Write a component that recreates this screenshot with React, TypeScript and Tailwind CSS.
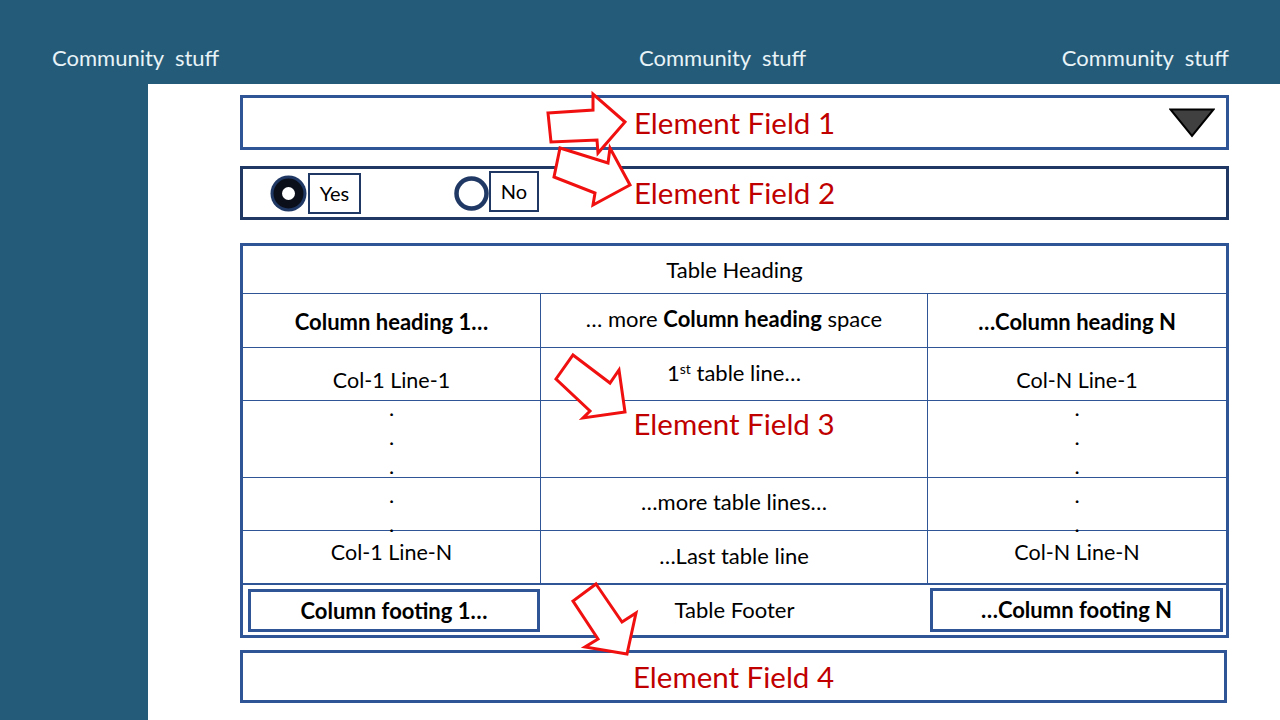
import React from "react";

const Dot = () => <div className="h-[10px] leading-[10px]">.</div>;

export default function App() {
  return (
    <div className="relative w-[1280px] h-[720px] overflow-hidden bg-[#245B79] font-['Lato',sans-serif] flex flex-col">
      {/* Header */}
      <header className="h-[84px] shrink-0 flex items-start pt-[44px] text-[#E8F3F7] text-[22px] leading-[28px]">
        <span className="ml-[52px] w-[168px] whitespace-nowrap">Community&nbsp; stuff</span>
        <span className="ml-[419px] w-[168px] whitespace-nowrap">Community&nbsp; stuff</span>
        <span className="ml-auto mr-[51px] whitespace-nowrap">Community&nbsp; stuff</span>
      </header>

      <div className="flex flex-1">
        <aside className="w-[148px] shrink-0" />
        <main className="flex-1 bg-white pl-[92px] pr-[51px] pt-[11px] flex flex-col text-black">
          {/* Element Field 1 */}
          <div className="h-[55px] border-[3px] border-[#2F5597] grid grid-cols-[1fr_auto_1fr] items-center">
            <div />
            <div className="text-[#C00000] text-[29.5px] leading-[34px]">Element Field 1</div>
            <div className="flex justify-end pr-[11px]">
              <svg width="46" height="30" viewBox="0 0 46 30">
                <polygon points="1.5,1.5 44.5,1.5 23,28" fill="#404040" stroke="#000" strokeWidth="2" strokeLinejoin="miter" />
              </svg>
            </div>
          </div>

          {/* Element Field 2 */}
          <div className="mt-[16px] h-[54px] border-[3px] border-[#1F3864] grid grid-cols-[1fr_auto_1fr] items-center">
            <div className="flex items-center pl-[27px]">
              <svg width="37" height="37" viewBox="0 0 37 37">
                <circle cx="18.5" cy="18.5" r="18" fill="#1F3864" />
                <circle cx="18.5" cy="18.5" r="15" fill="#0A0F1A" />
                <circle cx="18.5" cy="18.5" r="6.5" fill="#fff" />
              </svg>
              <div className="ml-[1px] w-[53px] h-[41px] border-[2.5px] border-[#1F3864] flex items-center justify-center text-[20px] leading-[24px]">
                Yes
              </div>
              <svg className="ml-[93px]" width="35" height="35" viewBox="0 0 35 35">
                <circle cx="17.5" cy="17.5" r="15" fill="#fff" stroke="#1F3864" strokeWidth="4.5" />
              </svg>
              <div className="-mt-[4px] w-[50px] h-[41px] border-[2.5px] border-[#1F3864] flex items-center justify-center text-[20px] leading-[24px]">
                No
              </div>
            </div>
            <div className="text-[#C00000] text-[29.5px] leading-[34px]">Element Field 2</div>
            <div />
          </div>

          {/* Element Field 3 : table */}
          <div className="mt-[23px] h-[395px] border-[3px] border-[#2F5597] flex flex-col text-[22px] leading-[26px]">
            <div className="h-[48px] shrink-0 border-b border-[#2F5597] flex items-center justify-center">
              Table Heading
            </div>

            <div className="h-[54px] shrink-0 border-b border-[#2F5597] grid grid-cols-[298px_387px_1fr]">
              <div className="border-r border-[#2F5597] text-center pt-[15px] font-bold">Column heading 1…</div>
              <div className="border-r border-[#2F5597] text-center pt-[12px]">
                … more <span className="font-bold">Column heading</span> space
              </div>
              <div className="text-center pt-[15px] font-bold">…Column heading N</div>
            </div>

            <div className="h-[53px] shrink-0 border-b border-[#2F5597] grid grid-cols-[298px_387px_1fr]">
              <div className="border-r border-[#2F5597] text-center pt-[19px] text-[21.5px]">Col-1 Line-1</div>
              <div className="border-r border-[#2F5597] text-center pt-[12px]">
                1<sup className="text-[14px]">st</sup> table line…
              </div>
              <div className="text-center pt-[19px] text-[21.5px]">Col-N Line-1</div>
            </div>

            <div className="h-[77px] shrink-0 border-b border-[#2F5597] grid grid-cols-[298px_387px_1fr]">
              <div className="border-r border-[#2F5597] flex flex-col items-center gap-[19px] pt-[2px]">
                <Dot />
                <Dot />
                <Dot />
              </div>
              <div className="border-r border-[#2F5597] text-center pt-[6px] text-[#C00000] text-[29.5px] leading-[34px]">
                Element Field 3
              </div>
              <div className="flex flex-col items-center gap-[19px] pt-[2px]">
                <Dot />
                <Dot />
                <Dot />
              </div>
            </div>

            <div className="h-[53px] shrink-0 border-b border-[#2F5597] grid grid-cols-[298px_387px_1fr]">
              <div className="border-r border-[#2F5597] flex flex-col items-center gap-[19px] pt-[12px]">
                <Dot />
                <Dot />
              </div>
              <div className="border-r border-[#2F5597] text-center pt-[11px]">…more table lines…</div>
              <div className="flex flex-col items-center gap-[19px] pt-[12px]">
                <Dot />
                <Dot />
              </div>
            </div>

            <div className="h-[52px] shrink-0 grid grid-cols-[298px_387px_1fr]">
              <div className="border-r border-[#2F5597] text-center pt-[8px] text-[21.5px]">Col-1 Line-N</div>
              <div className="border-r border-[#2F5597] text-center pt-[12px]">…Last table line</div>
              <div className="text-center pt-[8px] text-[21.5px]">Col-N Line-N</div>
            </div>

            <div className="flex-1 border-t-2 border-[#2F5597] grid grid-cols-[298px_387px_1fr]">
              <div className="pl-[5px] pr-[1px] pt-[4px]">
                <div className="h-[43px] border-[3px] border-[#2F5597] flex items-center justify-center font-bold">
                  Column footing 1…
                </div>
              </div>
              <div className="flex items-center justify-center">Table Footer</div>
              <div className="pl-[2px] pr-[3px] pt-[3px]">
                <div className="h-[44px] border-[3px] border-[#2F5597] flex items-center justify-center font-bold">
                  …Column footing N
                </div>
              </div>
            </div>
          </div>

          {/* Element Field 4 */}
          <div className="mt-[12px] mr-[2px] h-[53px] border-[3px] border-[#2F5597] flex items-center justify-center">
            <div className="text-[#C00000] text-[29.5px] leading-[34px]">Element Field 4</div>
          </div>
        </main>
      </div>

      {/* Callout arrows */}
      <svg className="absolute inset-0 pointer-events-none" width="1280" height="720" viewBox="0 0 1280 720">
        <g fill="#fff" stroke="#F01010" strokeWidth="3" strokeLinejoin="miter">
          <polygon points="548,113 593,110 593,94 625,122 598,153 597,140 551,142" />
          <polygon points="560,148 608,163 610,148 630,185 593,205 595,193 554,177" />
          <polygon points="573,355 610,383 619,370 625,412 583,418 590,411 556,379" />
          <polygon points="596,584 622,622 636,613 627,654 585,647 598,639 573,601" />
        </g>
      </svg>
    </div>
  );
}
